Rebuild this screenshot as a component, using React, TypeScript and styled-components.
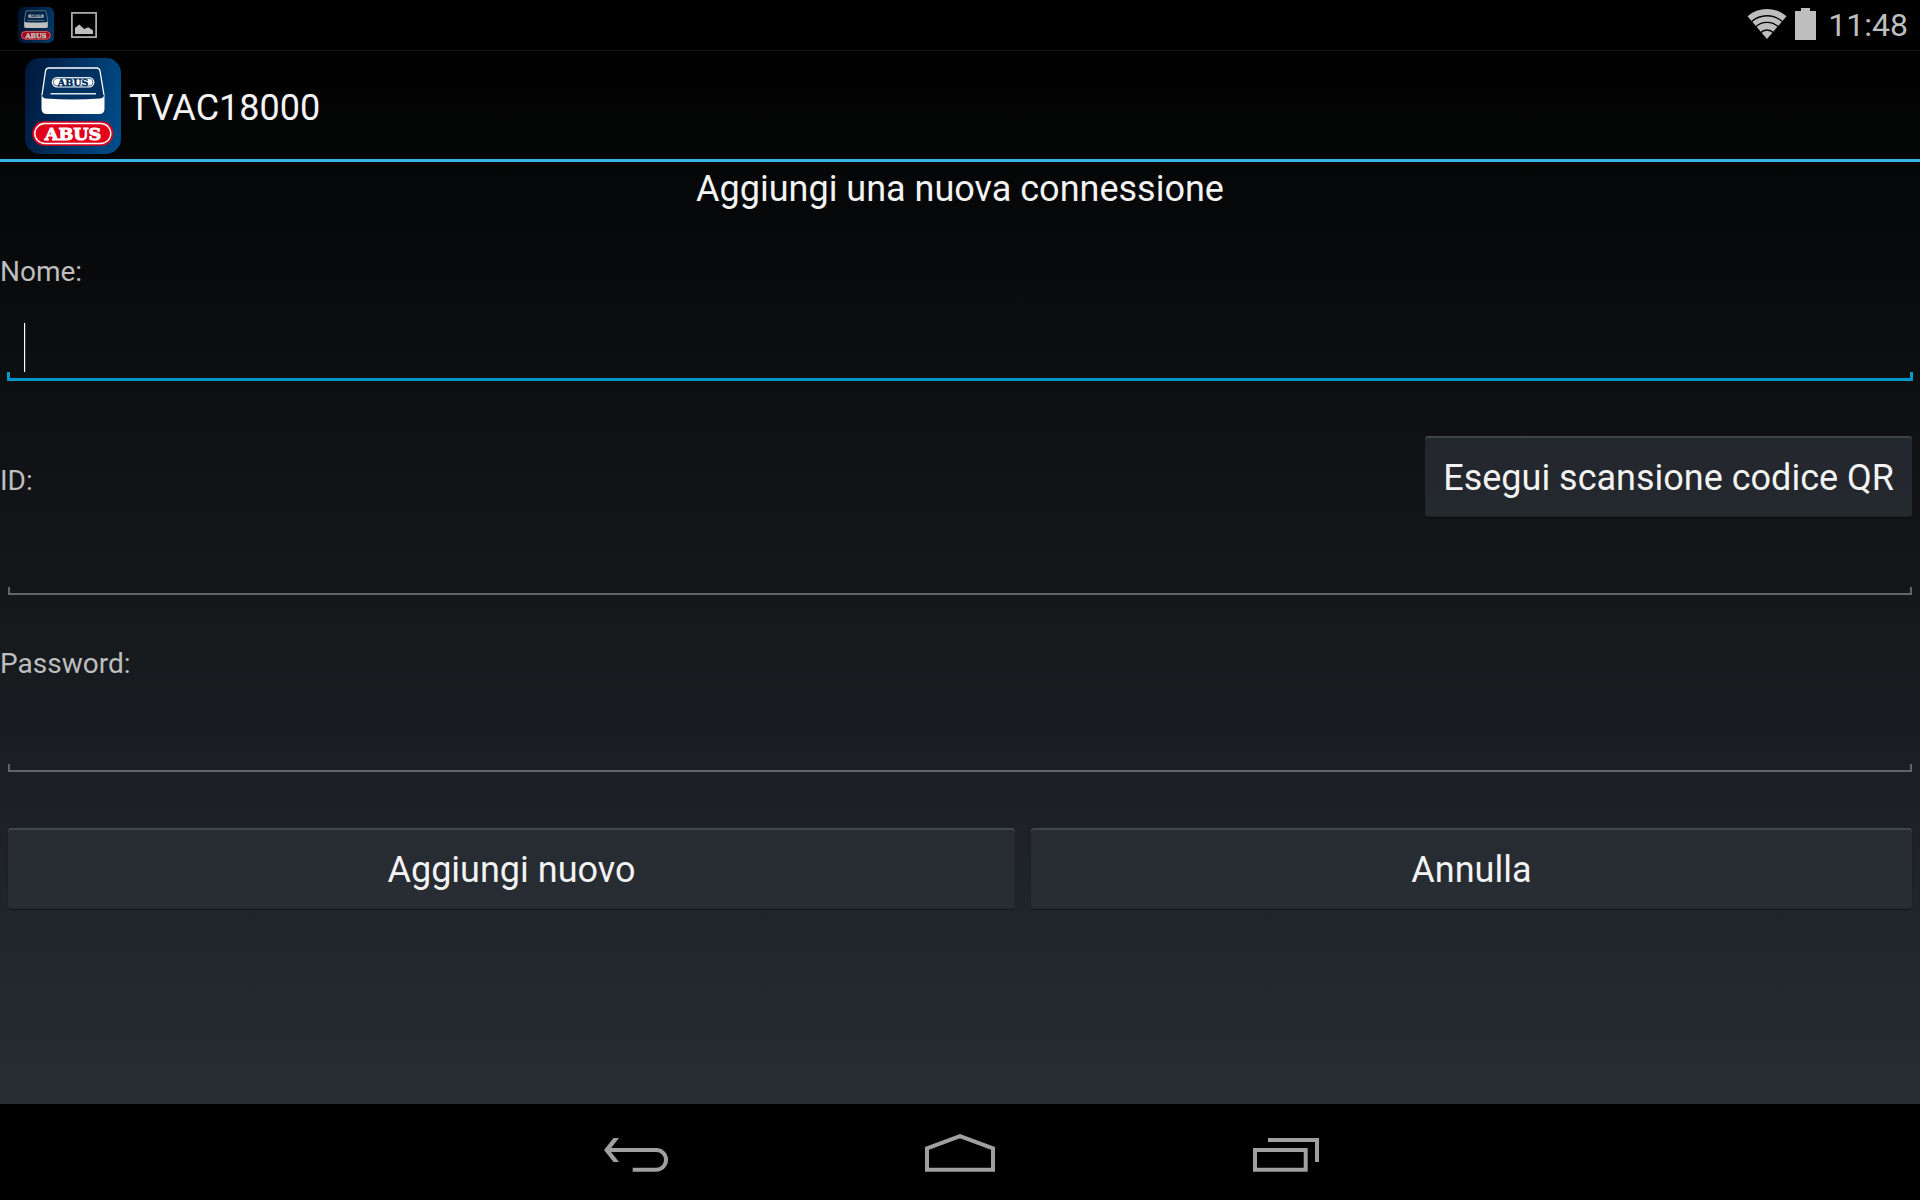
import React, { useId, useState } from "react";
import styled, { createGlobalStyle } from "styled-components";

const GlobalStyle = createGlobalStyle`
  *, *::before, *::after { box-sizing: border-box; }
  html, body { margin: 0; background: #000; }
  body, button, input { font-family: Roboto, "Noto Sans", sans-serif; }
`;

const Screen = styled.div`
  min-height: 100vh;
  display: flex;
  flex-direction: column;
  color: #f3f3f3;
`;

const StatusBar = styled.header`
  height: 50px;
  padding: 0 12px 0 18px;
  display: flex;
  align-items: center;
  justify-content: space-between;
  color: #bebebe;
`;

const Notifications = styled.div`
  display: flex;
  align-items: center;
  gap: 17px;
  svg { display: block; }
`;

const SystemIcons = styled(Notifications)`
  gap: 8px;
  padding-bottom: 2px;
`;

const Dimmed = styled.span`
  opacity: 0.75;
`;

const Clock = styled.time`
  font-size: 32px;
  line-height: 40px;
  padding: 2px 0 0 4px;
`;

const Window = styled.div`
  flex: 1;
  display: flex;
  flex-direction: column;
  border-top: 1px solid #151515;
  background: linear-gradient(#010101, #272d33);
`;

const ActionBar = styled.div`
  height: 111px;
  padding: 2px 25px 0;
  display: flex;
  align-items: center;
  gap: 8px;
  border-bottom: 3px solid #33b5e5;
  svg { display: block; }
`;

const AppTitle = styled.h1`
  margin: 0;
  padding-top: 4px;
  font-size: 36px;
  font-weight: 400;
  line-height: 48px;
`;

const Form = styled.form`
  display: flex;
  flex-direction: column;
`;

const Heading = styled.h2`
  margin: 0 0 36px;
  font-size: 36px;
  font-weight: 400;
  line-height: 54px;
  text-align: center;
`;

const Label = styled.label`
  font-size: 28px;
  line-height: 40px;
  color: #bebebe;
`;

const Field = styled.div<{ $gap: number }>`
  display: flex;
  flex-direction: column;
  gap: ${(p) => p.$gap}px;
`;

const ScanRow = styled.div`
  display: flex;
  align-items: center;
  justify-content: space-between;
  padding-right: 8px;
  margin-top: 55px;
  ${Label} { padding-top: 8px; }
`;

const IdField = styled(Field)`
  margin-bottom: 49px;
`;

const InputWrap = styled.div<{ $focused: boolean }>`
  position: relative;
  display: flex;
  margin: 0 ${(p) => (p.$focused ? 7 : 8)}px;
  --line: ${(p) => (p.$focused ? "#0099cc" : "#616568")};
  --weight: ${(p) => (p.$focused ? 3 : 2)}px;
`;

const Input = styled.input`
  flex: 1;
  min-width: 0;
  box-sizing: content-box;
  height: 62px;
  padding: 0 16px;
  border: 0;
  border-bottom: var(--weight) solid var(--line);
  border-radius: 0;
  outline: 0;
  color: #fff;
  font-size: 36px;
  caret-color: transparent;
  background:
    linear-gradient(var(--line), var(--line)) left bottom / var(--weight) 6px no-repeat,
    linear-gradient(var(--line), var(--line)) right bottom / var(--weight) 6px no-repeat;
`;

const Caret = styled.span`
  position: absolute;
  left: 17px;
  top: 7px;
  width: 1px;
  height: 49px;
  background: #fff;
  box-shadow: 1px 0 1px rgba(255, 255, 255, 0.2);
`;

const Button = styled.button`
  height: 81px;
  padding: 2px 18px 0;
  border: 0;
  border-radius: 3px;
  color: #f3f3f3;
  font-size: 36px;
  line-height: 48px;
  background: rgba(43, 48, 55, 0.75);
  box-shadow:
    inset 0 2px 0 rgba(255, 255, 255, 0.13),
    inset 0 -1px 0 rgba(0, 0, 0, 0.15),
    0 1px 1px rgba(0, 0, 0, 0.35);
`;

const Actions = styled.div`
  display: grid;
  grid-template-columns: 8fr 7fr;
  gap: 16px;
  margin: 56px 8px 0;
`;

const NavBar = styled.nav`
  height: 96px;
  display: flex;
  justify-content: center;
  background: #000;
`;

const NavButton = styled.button`
  flex: 0 1 324px;
  display: flex;
  justify-content: center;
  padding: 0;
  border: 0;
  background: none;
`;

function AppIcon({ size }: { size: number }) {
  const id = useId();
  return (
    <svg width={size} height={size} viewBox="0 0 96 96" aria-hidden="true">
      <defs>
        <linearGradient id={id} x1="0" y1="0.3" x2="1" y2="0.5">
          <stop offset="0" stopColor="#001a3e" />
          <stop offset="1" stopColor="#004a86" />
        </linearGradient>
      </defs>
      <rect width="96" height="96" rx="15" fill={`url(#${id})`} />
      <path d="M16.5 37V51Q16.5 56 22 56H74Q79.500 56 79.500 51V37Z" fill="#fff" />
      <path
        d="M24 10H71.500Q74.500 10 75 13L79 36Q79.500 40 75 40.500Q48 42.500 21 40.500Q16.500 40 17 36L20.500 13Q21 10 24 10Z"
        fill="#003160"
      />
      <path
        d="M17 37L20.500 13Q21 10 24 10H71.500Q74.500 10 75 13L79 37"
        fill="none"
        stroke="#fff"
        strokeWidth="1.3"
      />
      <path d="M25.500 35.700H71" stroke="#dce6f0" strokeWidth="1.4" />
      <rect x="26.800" y="19" width="42.600" height="10.400" rx="5.200" fill="#fff" />
      <rect x="28.300" y="20.300" width="39.600" height="7.800" rx="3.900" fill="none" stroke="#003160" strokeWidth="0.700" />
      <text x="48.100" y="27.500" textAnchor="middle" fontFamily="DejaVu Serif" fontWeight="700" fontSize="9.500" fill="#002f5d" stroke="#002f5d" strokeWidth="0.400">ABUS</text>
      <rect x="7.300" y="63.300" width="81" height="24.500" rx="12.200" fill="#e2001a" />
      <rect x="9.800" y="65.500" width="76" height="20" rx="10" fill="none" stroke="#fff" strokeWidth="1.400" />
      <text x="48" y="82" textAnchor="middle" fontFamily="DejaVu Serif" fontWeight="700" fontSize="17.500" fill="#fff" stroke="#fff" strokeWidth="1">ABUS</text>
    </svg>
  );
}

const PictureIcon = () => (
  <svg width="26" height="26" viewBox="0 0 26 26" aria-hidden="true">
    <rect x="0.900" y="0.900" width="24.200" height="24.200" fill="none" stroke="#bebebe" strokeWidth="1.600" />
    <path d="M4 22V16L8.300 12.500L13.200 17L17.200 15.300L22 18.500V22Z" fill="#bebebe" />
  </svg>
);

const WifiIcon = () => (
  <svg width="40" height="32" viewBox="0 0 40 32" aria-hidden="true">
    <path d="M20 31L0.500 8.200A30 30 0 0 1 39.500 8.200Z" fill="#bebebe" />
    <g fill="none" stroke="#000" strokeWidth="1.300">
      <path d="M3.500 14.600A23.300 23.300 0 0 1 36.500 14.600" />
      <path d="M8 19.400A16.700 16.700 0 0 1 32 19.400" />
      <path d="M13.500 24.800A9 9 0 0 1 26.500 24.800" />
    </g>
  </svg>
);

const BatteryIcon = () => (
  <svg width="21" height="32" viewBox="0 0 21 32" aria-hidden="true">
    <path d="M6 0H15V3H21V32H0V3H6Z" fill="#bebebe" />
  </svg>
);

const BackIcon = () => (
  <svg width="96" height="96" viewBox="0 0 96 96" aria-hidden="true">
    <path d="M16 46L25.500 34H31L21.500 46L31 58H25.500Z" fill="#a0a0a0" />
    <path d="M19 46H68.200A9.850 9.850 0 0 1 68.200 65.700H44.700" fill="none" stroke="#a0a0a0" strokeWidth="4" />
  </svg>
);

const HomeIcon = () => (
  <svg width="96" height="96" viewBox="0 0 96 96" aria-hidden="true">
    <path d="M15 65.700V44.500L48 32.200L81 44.500V65.700Z" fill="none" stroke="#a0a0a0" strokeWidth="4" />
  </svg>
);

const RecentsIcon = () => (
  <svg width="96" height="96" viewBox="0 0 96 96" aria-hidden="true">
    <path d="M19 46H69.700V65.700H19ZM32 36H81V58" fill="none" stroke="#a0a0a0" strokeWidth="4" />
  </svg>
);

interface TextFieldProps {
  id: string;
  type?: string;
  focused: string;
  onFocus: (id: string) => void;
}

function TextField({ id, type = "text", focused, onFocus }: TextFieldProps) {
  const [value, setValue] = useState("");
  const active = focused === id;
  return (
    <InputWrap $focused={active}>
      <Input
        id={id}
        type={type}
        value={value}
        onChange={(e) => setValue(e.target.value)}
        onFocus={() => onFocus(id)}
        style={{ caretColor: value ? "#fff" : undefined }}
      />
      {active && !value && <Caret />}
    </InputWrap>
  );
}

export default function App() {
  const [focused, setFocused] = useState("nome");
  return (
    <Screen>
      <GlobalStyle />
      <StatusBar>
        <Notifications>
          <Dimmed><AppIcon size={36} /></Dimmed>
          <PictureIcon />
        </Notifications>
        <SystemIcons>
          <WifiIcon />
          <BatteryIcon />
          <Clock>11:48</Clock>
        </SystemIcons>
      </StatusBar>
      <Window>
        <ActionBar>
          <AppIcon size={96} />
          <AppTitle>TVAC18000</AppTitle>
        </ActionBar>
        <Form onSubmit={(e) => e.preventDefault()}>
          <Heading>Aggiungi una nuova connessione</Heading>
          <Field $gap={24}>
            <Label htmlFor="nome">Nome:</Label>
            <TextField id="nome" focused={focused} onFocus={setFocused} />
          </Field>
          <IdField $gap={14}>
            <ScanRow>
              <Label htmlFor="device-id">ID:</Label>
              <Button type="button">Esegui scansione codice QR</Button>
            </ScanRow>
            <TextField id="device-id" focused={focused} onFocus={setFocused} />
          </IdField>
          <Field $gap={24}>
            <Label htmlFor="password">Password:</Label>
            <TextField id="password" type="password" focused={focused} onFocus={setFocused} />
          </Field>
          <Actions>
            <Button type="submit">Aggiungi nuovo</Button>
            <Button type="button">Annulla</Button>
          </Actions>
        </Form>
      </Window>
      <NavBar>
        <NavButton type="button" aria-label="Indietro"><BackIcon /></NavButton>
        <NavButton type="button" aria-label="Home"><HomeIcon /></NavButton>
        <NavButton type="button" aria-label="Recenti"><RecentsIcon /></NavButton>
      </NavBar>
    </Screen>
  );
}
